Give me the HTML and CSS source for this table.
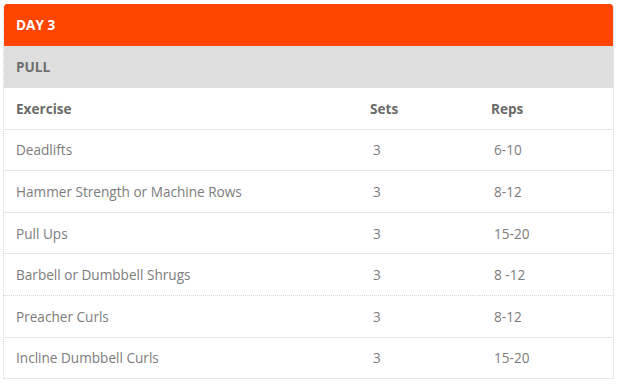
FILE: index.html
```html
<!DOCTYPE html>
<html>
<head>
<meta charset="utf-8">
<link rel="stylesheet" href="styles.css">
</head>
<body>
<div class="card">
  <div class="day">DAY 3</div>
  <div class="split">PULL</div>
  <table class="plan">
    <colgroup><col class="c1"><col class="c2"><col class="c3"></colgroup>
    <thead>
      <tr><th>Exercise</th><th>Sets</th><th>Reps</th></tr>
    </thead>
    <tbody>
      <tr><td>Deadlifts</td><td class="num">3</td><td class="num">6-10</td></tr>
      <tr><td>Hammer Strength or Machine Rows</td><td class="num">3</td><td class="num">8-12</td></tr>
      <tr><td>Pull Ups</td><td class="num">3</td><td class="num">15-20</td></tr>
      <tr class="dotted"><td>Barbell or Dumbbell Shrugs</td><td class="num">3</td><td class="num">8 -12</td></tr>
      <tr><td>Preacher Curls</td><td class="num">3</td><td class="num">8-12</td></tr>
      <tr><td>Incline Dumbbell Curls</td><td class="num">3</td><td class="num">15-20</td></tr>
    </tbody>
  </table>
</div>
</body>
</html>
```
FILE: styles.css
```css
html, body {
  margin: 0;
  padding: 0;
  background: #ffffff;
}
body {
  padding: 4px 0 0 3px;
  font-family: "Open Sans", "Liberation Sans", sans-serif;
  font-size: 13.6px;
}
.card {
  width: 611px;
  border-radius: 4px 4px 0 0;
  overflow: hidden;
  border-left: 1px dotted #d4d4d4;
  border-right: 1px solid #e6e6e6;
  box-sizing: border-box;
}
.day {
  height: 42px;
  line-height: 42px;
  background: #ff4500;
  color: #ffffff;
  font-weight: 700;
  padding-left: 12px;
}
.split {
  height: 42px;
  line-height: 42px;
  background: #dedede;
  color: #6e6e6e;
  font-weight: 700;
  padding-left: 12px;
}
.plan {
  width: 100%;
  border-collapse: collapse;
  table-layout: fixed;
}
.c1 { width: 354px; }
.c2 { width: 121px; }
.plan th, .plan td {
  height: 40.6px;
  padding: 0 0 0 12px;
  text-align: left;
  border-bottom: 1px solid #e8e8e8;
}
.plan th {
  color: #6a6a6a;
  font-weight: 700;
}
.plan td {
  color: #7c7c7c;
  font-weight: 400;
}
.plan td.num {
  padding-left: 15px;
}
.plan tr.dotted td {
  border-bottom: 1px dotted #dcdcdc;
}
```
